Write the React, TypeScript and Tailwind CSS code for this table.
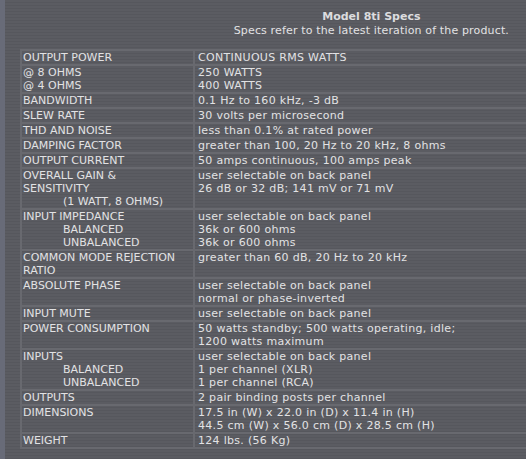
import React from "react";

type Row = { label: string[]; value: string[] };

// indented sub-labels are prefixed with ">"
const rows: Row[] = [
  { label: ["OUTPUT POWER"], value: ["CONTINUOUS RMS WATTS"] },
  { label: ["@ 8 OHMS", "@ 4 OHMS"], value: ["250 WATTS", "400 WATTS"] },
  { label: ["BANDWIDTH"], value: ["0.1 Hz to 160 kHz, -3 dB"] },
  { label: ["SLEW RATE"], value: ["30 volts per microsecond"] },
  { label: ["THD AND NOISE"], value: ["less than 0.1% at rated power"] },
  { label: ["DAMPING FACTOR"], value: ["greater than 100, 20 Hz to 20 kHz, 8 ohms"] },
  { label: ["OUTPUT CURRENT"], value: ["50 amps continuous, 100 amps peak"] },
  {
    label: ["OVERALL GAIN &", "SENSITIVITY", ">(1 WATT, 8 OHMS)"],
    value: ["user selectable on back panel", "26 dB or 32 dB; 141 mV or 71 mV"],
  },
  {
    label: ["INPUT IMPEDANCE", ">BALANCED", ">UNBALANCED"],
    value: ["user selectable on back panel", "36k or 600 ohms", "36k or 600 ohms"],
  },
  { label: ["COMMON MODE REJECTION", "RATIO"], value: ["greater than 60 dB, 20 Hz to 20 kHz"] },
  { label: ["ABSOLUTE PHASE"], value: ["user selectable on back panel", "normal or phase-inverted"] },
  { label: ["INPUT MUTE"], value: ["user selectable on back panel"] },
  {
    label: ["POWER CONSUMPTION"],
    value: ["50 watts standby; 500 watts operating, idle;", "1200 watts maximum"],
  },
  {
    label: ["INPUTS", ">BALANCED", ">UNBALANCED"],
    value: ["user selectable on back panel", "1 per channel (XLR)", "1 per channel (RCA)"],
  },
  { label: ["OUTPUTS"], value: ["2 pair binding posts per channel"] },
  {
    label: ["DIMENSIONS"],
    value: ["17.5 in (W) x 22.0 in (D) x 11.4 in (H)", "44.5 cm (W) x 56.0 cm (D) x 28.5 cm (H)"],
  },
  { label: ["WEIGHT"], value: ["124 lbs. (56 Kg)"] },
];

const stripes =
  "bg-[repeating-linear-gradient(to_bottom,#5b5c62_0px,#5b5c62_2px,#56575d_2px,#56575d_3px)] bg-fixed";

function Line({ text }: { text: string }) {
  if (text.startsWith(">")) return <div className="pl-[40px]">{text.slice(1)}</div>;
  return <div>{text}</div>;
}

export default function App() {
  return (
    <div
      className={`relative h-[459px] w-[526px] overflow-hidden ${stripes} font-['DejaVu_Sans',_Verdana,_sans-serif] text-[11px] leading-[13px] text-[#e2e2e4]`}
    >
      {/* left edge strip */}
      <div className="absolute left-0 top-0 h-full w-[5px] bg-[#686b78]" />

      <div className="flex justify-end pr-[17px] pt-[10px]">
        <div className="text-center">
          <div className="font-bold text-[#dcdcdf]">Model 8ti Specs</div>
          <div className="mt-[1px] tracking-[0.15px]">Specs refer to the latest iteration of the product.</div>
        </div>
      </div>

      <div className="ml-[20px] mt-[12px] w-[530px] bg-[#68696f] p-[2px]">
        <div className="grid grid-cols-[171px_1fr] gap-x-[2px] gap-y-[2px]">
          {rows.map((r, i) => (
            <React.Fragment key={i}>
              <div className={`${stripes} pl-[1px]`}>
                {r.label.map((l, j) => (
                  <Line key={j} text={l} />
                ))}
              </div>
              <div className={`${stripes} pl-[3px] tracking-[0.3px]`}>
                {r.value.map((v, j) => (
                  <div key={j}>{v}</div>
                ))}
              </div>
            </React.Fragment>
          ))}
        </div>
      </div>
    </div>
  );
}
